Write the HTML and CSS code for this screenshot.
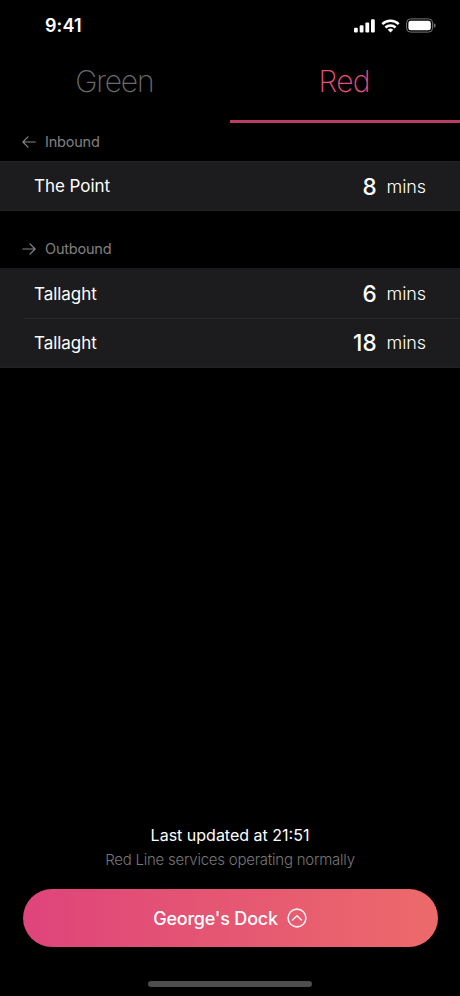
FILE: index.html
```html
<!DOCTYPE html>
<html lang="en">
<head>
<meta charset="utf-8">
<title>Luas departures</title>
<link rel="stylesheet" href="styles.css">
</head>
<body>
<div class="screen">
  <header class="status">
    <span class="clock">9:41</span>
    <div class="status-icons">
      <svg class="signal" width="21" height="14" viewBox="0 0 21 14" fill="#fff"><rect x="0" y="8.7" width="3.8" height="4.8" rx="1.1"/><rect x="5.7" y="6.3" width="3.8" height="7.2" rx="1.1"/><rect x="11.4" y="3.5" width="3.8" height="10" rx="1.1"/><rect x="17" y="0.3" width="3.8" height="13.2" rx="1.1"/></svg>
      <svg class="wifi" width="19" height="14" viewBox="0 0 19 14" fill="none" stroke="#fff" stroke-width="2.5"><path d="M1.3 5.1a11.7 11.7 0 0 1 16.4 0"/><path d="M4.4 8.5a7.3 7.3 0 0 1 10.2 0"/><path d="M9.5 13.5L6.7 10.8a4.1 4.1 0 0 1 5.6 0z" fill="#fff" stroke="none"/></svg>
      <svg class="battery" width="30" height="15" viewBox="0 0 30 15"><rect x="0.6" y="0.9" width="26" height="13.2" rx="4" fill="none" stroke="#777"/><rect x="2.4" y="2.7" width="22.4" height="9.6" rx="2.4" fill="#fff"/><path d="M27.9 5.2v4.6a2.4 2.4 0 0 0 0-4.6z" fill="#777"/></svg>
    </div>
  </header>

  <nav class="tabs">
    <a class="tab"><span class="tab-green">Green</span></a>
    <a class="tab active"><span class="tab-red">Red</span></a>
  </nav>

  <main>
    <section class="direction">
      <h2 class="heading">
        <svg width="14" height="12" viewBox="0 0 14 12"><path d="M13.3 6H.9M6 .9L.9 6 6 11.1"/></svg>
        <span>Inbound</span>
      </h2>
      <ul class="list">
        <li class="row"><span class="stop">The Point</span><span class="due">8</span><span class="unit">mins</span></li>
      </ul>
    </section>
    <section class="direction">
      <h2 class="heading">
        <svg width="14" height="12" viewBox="0 0 14 12"><path d="M.7 6h12.4M8 .9L13.1 6 8 11.1"/></svg>
        <span>Outbound</span>
      </h2>
      <ul class="list">
        <li class="row"><span class="stop">Tallaght</span><span class="due">6</span><span class="unit">mins</span></li>
        <li class="row"><span class="stop">Tallaght</span><span class="due">18</span><span class="unit">mins</span></li>
      </ul>
    </section>
  </main>

  <footer class="footer">
    <p class="updated">Last updated at 21:51</p>
    <p class="service">Red Line services operating normally</p>
    <button class="station">
      <span>George's Dock</span>
      <svg width="20" height="20" viewBox="0 0 20 20"><circle cx="10" cy="10" r="8.9"/><path d="M5.6 12L10 7.7l4.4 4.3"/></svg>
    </button>
    <div class="home-bar"></div>
  </footer>
</div>
</body>
</html>
```
FILE: styles.css
```css
* { box-sizing: border-box; margin: 0; padding: 0; }

body {
  background: #000;
  color: #fff;
  font-family: Inter, "Liberation Sans", sans-serif;
}

.screen { width: 460px; height: 996px; display: flex; flex-direction: column; overflow: hidden; }

.status { height: 51px; padding: 0 24px 0 45px; display: flex; align-items: center; justify-content: space-between; }
.clock { font-size: 18px; font-weight: 600; letter-spacing: 0.1px; }
.status-icons { display: flex; align-items: center; }
.wifi { margin-left: 6px; }
.battery { margin-left: 6px; }

.tabs { display: flex; height: 72px; }
.tab {
  flex: 1;
  padding-right: 1.5px;
  border-bottom: 3px solid transparent;
  font-size: 30px;
  font-weight: 250;
  line-height: 60px;
  letter-spacing: -1.2px;
  text-align: center;
  color: #6a6a6a;
}
.tab.active { letter-spacing: -0.7px; color: #e5507d; border-color: #b93e66; }

.heading {
  display: flex;
  align-items: center;
  gap: 9px;
  height: 38px;
  padding-left: 22px;
  font-size: 14.5px;
  font-weight: 400;
  letter-spacing: -0.2px;
  color: #808080;
}
.heading span { padding-bottom: 1px; }
.heading svg { fill: none; stroke: #858585; stroke-width: 1.2; stroke-linecap: round; stroke-linejoin: round; }

.list { list-style: none; background: #1c1c1e; border-top: 1px solid #222224; border-bottom: 1px solid #222224; }
.row {
  position: relative;
  display: flex;
  align-items: center;
  height: 48px;
  padding: 0 34px;
  font-size: 17px;
}
.row + .row { height: 49px; padding-top: 1px; }
.row + .row::before { content: ""; position: absolute; left: 24px; right: 0; top: 0; height: 1px; background: #272729; }
.stop { flex: 1; letter-spacing: -0.05px; }
.due { font-size: 22.5px; font-weight: 480; }
.unit { margin-left: 10px; font-size: 18px; font-weight: 350; letter-spacing: -0.1px; }
.direction + .direction { margin-top: 19px; }
.direction + .direction .list { border-top-width: 2px; border-top-color: #19191b; }
.direction + .direction .due,
.direction + .direction .unit { padding-bottom: 1px; }

.footer { margin-top: auto; display: flex; flex-direction: column; align-items: center; }
.updated { font-size: 16px; line-height: 24px; }
.service { padding-top: 1px; font-size: 15px; font-weight: 350; line-height: 24px; letter-spacing: -0.24px; color: #777; }
.station {
  display: flex;
  align-items: center;
  justify-content: center;
  gap: 9px;
  width: 415px;
  height: 58px;
  margin-top: 17px;
  border: 0;
  border-radius: 29px;
  background: linear-gradient(90deg, #df447b, #ec6a6a);
  color: #fff;
  font: 500 18px Inter, "Liberation Sans", sans-serif;
  letter-spacing: -0.2px;
}
.station svg { fill: none; stroke: #ffeef0; stroke-width: 1.6; stroke-linecap: round; stroke-linejoin: round; }
.home-bar { width: 164px; height: 6px; margin: 34px 0 9px; border-radius: 3px; background: #4d4d4d; }
```
